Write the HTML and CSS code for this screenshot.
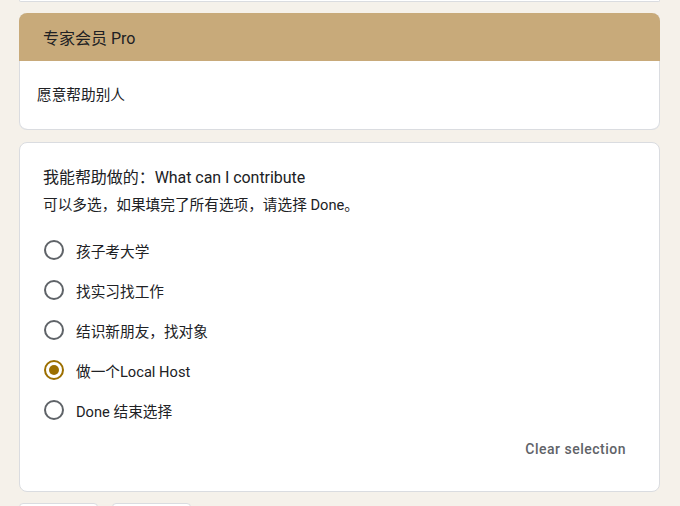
FILE: index.html
```html
<!DOCTYPE html>
<html lang="zh">
<head>
<meta charset="utf-8">
<title>Form</title>
<link rel="stylesheet" href="styles.css">
</head>
<body>
<div class="page">
  <div class="prev-card"></div>

  <section class="card section-card">
    <div class="section-head">专家会员 Pro</div>
    <div class="section-body">愿意帮助别人</div>
  </section>

  <section class="card question">
    <div class="q-title">我能帮助做的：What can I contribute</div>
    <div class="q-desc">可以多选，如果填完了所有选项，请选择 Done。</div>
    <div class="options">
      <label class="option"><span class="radio"></span><span class="opt-text">孩子考大学</span></label>
      <label class="option"><span class="radio"></span><span class="opt-text">找实习找工作</span></label>
      <label class="option"><span class="radio"></span><span class="opt-text">结识新朋友，找对象</span></label>
      <label class="option"><span class="radio checked"></span><span class="opt-text">做一个Local Host</span></label>
      <label class="option"><span class="radio"></span><span class="opt-text">Done 结束选择</span></label>
    </div>
    <div class="q-foot"><span class="clear">Clear selection</span></div>
  </section>

  <div class="nav">
    <span class="nav-btn"></span>
    <span class="nav-btn"></span>
  </div>
</div>
</body>
</html>
```

FILE: styles.css
```css
html, body {
  margin: 0;
  padding: 0;
  background: #f5f1ea;
  font-family: Roboto, "Noto Sans CJK SC", sans-serif;
  color: #202124;
}
.page {
  width: 641px;
  margin-left: 19px;
  display: flex;
  flex-direction: column;
}
.prev-card {
  height: 1px;
  background: #fff;
  border: 1px solid #dadce0;
  border-top: none;
  border-radius: 0 0 8px 8px;
  margin-bottom: 11px;
}
.card {
  background: #fff;
  border: 1px solid #dadce0;
  border-radius: 8px;
  box-sizing: border-box;
  margin-bottom: 12px;
}
.section-card {
  overflow: hidden;
  border: none;
  border-bottom: 1px solid #dadce0;
  box-shadow: inset 1px 0 0 #dadce0, inset -1px 0 0 #dadce0;
}
.section-head {
  height: 48px;
  background: #c8aa7a;
  display: flex;
  align-items: center;
  padding-left: 24px;
  font-size: 16px;
  color: #202124;
}
.section-body {
  height: 65px;
  display: flex;
  align-items: center;
  padding-left: 18px;
  padding-bottom: 3px;
  font-size: 14.67px;
}
.question {
  padding: 23px 24px 24px 23px;
  height: 350px;
}
.q-title {
  font-size: 16px;
  line-height: 24px;
  letter-spacing: -0.05px;
}
.q-desc {
  font-size: 14.67px;
  line-height: 20px;
  margin-top: 5px;
}
.options {
  margin-top: 15px;
  display: flex;
  flex-direction: column;
}
.option {
  height: 40px;
  display: flex;
  align-items: center;
  font-size: 14.67px;
}
.radio {
  width: 20px;
  height: 20px;
  box-sizing: border-box;
  border: 2px solid #5f6368;
  border-radius: 50%;
  margin-left: 1px;
  margin-right: 12px;
  display: flex;
  align-items: center;
  justify-content: center;
}
.radio.checked {
  border-color: #9c6f00;
}
.radio.checked::after {
  content: "";
  width: 10px;
  height: 10px;
  border-radius: 50%;
  background: #9c6f00;
}
.q-foot {
  display: flex;
  justify-content: flex-end;
  height: 36px;
  align-items: center;
  margin-top: 1px;
}
.clear {
  font-size: 14px;
  font-weight: 500;
  color: #5f6368;
  padding: 0 9px 0 8px;
  letter-spacing: 0.5px;
}
.nav {
  display: flex;
  gap: 14px;
  margin-top: -1px;
}
.nav-btn {
  width: 79px;
  height: 36px;
  background: #fff;
  border: 1px solid #dadce0;
  border-radius: 4px;
  box-sizing: border-box;
}
```
